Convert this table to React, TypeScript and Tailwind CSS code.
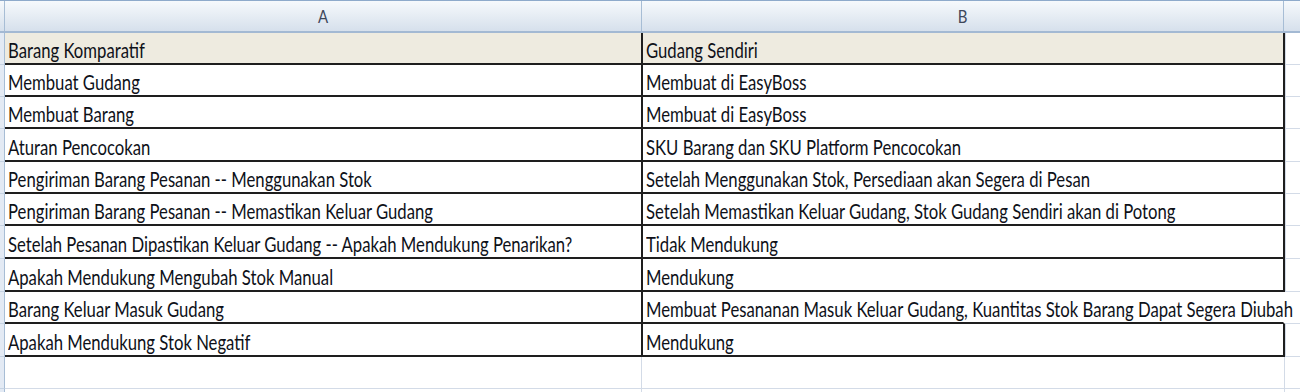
import React from "react";

const data: [string, string][] = [
  ["Barang Komparatif", "Gudang Sendiri"],
  ["Membuat Gudang", "Membuat di EasyBoss"],
  ["Membuat Barang", "Membuat di EasyBoss"],
  ["Aturan Pencocokan", "SKU Barang dan SKU Platform Pencocokan"],
  ["Pengiriman Barang Pesanan -- Menggunakan Stok", "Setelah Menggunakan Stok, Persediaan akan Segera di Pesan"],
  ["Pengiriman Barang Pesanan -- Memastikan Keluar Gudang", "Setelah Memastikan Keluar Gudang, Stok Gudang Sendiri akan di Potong"],
  ["Setelah Pesanan Dipastikan Keluar Gudang -- Apakah Mendukung Penarikan?", "Tidak Mendukung"],
  ["Apakah Mendukung Mengubah Stok Manual", "Mendukung"],
  ["Barang Keluar Masuk Gudang", "Membuat Pesananan Masuk Keluar Gudang, Kuantitas Stok Barang Dapat Segera Diubah"],
  ["Apakah Mendukung Stok Negatif", "Mendukung"],
];

const heights = [
  "h-[32px]",
  "h-[32px]",
  "h-[32px]",
  "h-[33px]",
  "h-[32px]",
  "h-[32px]",
  "h-[33px]",
  "h-[33px]",
  "h-[32px]",
  "h-[33px]",
];

function CellText({ children }: { children: string }) {
  return (
    <span className="inline-block origin-bottom-left scale-y-[1.25] text-[16.7px] leading-none text-[#0e1119] [font-family:Lato,'Liberation_Sans',sans-serif]">
      {children}
    </span>
  );
}

export default function App() {
  return (
    <div className="w-[1300px] h-[392px] overflow-hidden bg-white">
      {/* Column header row */}
      <div className="flex h-[33px] border-t border-[#8eaacb] border-b-2 border-b-[#a3b9d3] bg-gradient-to-b from-[#f6f9fc] to-[#d6e0ec]">
        <div className="w-[5px] shrink-0 border-r border-[#a7bdd5]" />
        <div className="w-[637px] shrink-0 border-r border-[#a7bdd5] flex items-center justify-center">
          <span className="text-[15px] leading-none text-[#3d475a] [font-family:Lato,'Liberation_Sans',sans-serif] inline-block scale-y-[1.1]">A</span>
        </div>
        <div className="w-[642px] shrink-0 border-r border-[#a7bdd5] flex items-center justify-center">
          <span className="text-[15px] leading-none text-[#3d475a] [font-family:Lato,'Liberation_Sans',sans-serif] inline-block scale-y-[1.1]">B</span>
        </div>
        <div className="flex-1" />
      </div>

      {data.map(([a, b], i) => {
        const beige = i === 0;
        const overflow = i === 8;
        return (
          <div key={i} className={`flex ${heights[i]}`}>
            <div className="w-[5px] shrink-0 bg-[#e3eaf4] border-r border-r-[#a7bdd5] border-b border-b-[#c6d3e3]" />
            <div
              className={`w-[638px] shrink-0 flex items-end pl-[3px] pb-[1px] whitespace-nowrap border-b-2 border-r-2 border-[#1e1e1e] ${
                beige ? "bg-[#eeebe0]" : "bg-white"
              }`}
            >
              <CellText>{a}</CellText>
            </div>
            <div
              className={`relative z-10 w-[642px] shrink-0 flex items-end pl-[3px] pb-[1px] whitespace-nowrap border-b-2 border-r-2 border-b-[#1e1e1e] ${
                overflow ? "border-r-transparent" : "border-r-[#1e1e1e]"
              } ${beige ? "bg-[#eeebe0]" : "bg-white"}`}
            >
              <CellText>{b}</CellText>
            </div>
            <div className={`flex-1 ${overflow ? "" : "border-l border-l-[#d3dbe7]"} border-b border-b-[#d3dbe7]`} />
          </div>
        );
      })}

      {/* empty row */}
      <div className="flex h-[32px]">
        <div className="w-[5px] shrink-0 bg-[#e3eaf4] border-r border-r-[#a7bdd5] border-b border-b-[#c6d3e3]" />
        <div className="w-[637px] shrink-0 border-r border-b border-[#d3dbe7]" />
        <div className="w-[643px] shrink-0 border-r border-b border-[#d3dbe7]" />
        <div className="flex-1 border-b border-[#d3dbe7]" />
      </div>
      <div className="flex h-[8px]">
        <div className="w-[5px] shrink-0 bg-[#e3eaf4] border-r border-r-[#a7bdd5]" />
        <div className="w-[637px] shrink-0 border-r border-[#d3dbe7]" />
        <div className="w-[643px] shrink-0 border-r border-[#d3dbe7]" />
        <div className="flex-1" />
      </div>
    </div>
  );
}
